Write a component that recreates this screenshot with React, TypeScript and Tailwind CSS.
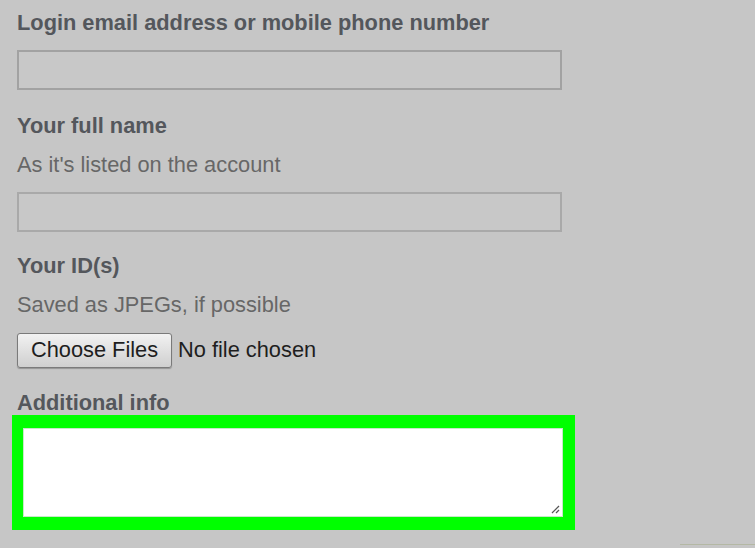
import React from "react";

export default function App() {
  const font = { fontFamily: '"Liberation Sans", Arial, Helvetica, sans-serif' };
  return (
    <div className="w-[755px] h-[548px] bg-[#c6c6c6] overflow-hidden relative" style={font}>
      <div className="flex flex-col pl-[17px] pt-[11px]">
        <div className="h-[24px] leading-[24px] text-[21.8px] font-bold text-[#54575c]">
          Login email address or mobile phone number
        </div>
        <div className="mt-[15px] w-[545px] h-[40px] border-2 border-[#a2a2a2] bg-[#c8c8c8]" />
        <div className="mt-[24px] h-[24px] leading-[24px] text-[21.8px] font-bold text-[#54575c]">
          Your full name
        </div>
        <div className="mt-[15px] h-[24px] leading-[24px] text-[21.8px] text-[#676767]">
          As it's listed on the account
        </div>
        <div className="mt-[15px] w-[545px] h-[40px] border-2 border-[#a9a9a9] bg-[#c8c8c8]" />
        <div className="mt-[22px] h-[24px] leading-[24px] text-[21.8px] font-bold text-[#54575c]">
          Your ID(s)
        </div>
        <div className="mt-[15px] h-[24px] leading-[24px] text-[21.8px] text-[#676767]">
          Saved as JPEGs, if possible
        </div>
        <div className="mt-[16px] flex items-center">
          <div className="w-[155px] h-[35px] flex items-center justify-center rounded-[3px] border border-[#7a7a7a] bg-gradient-to-b from-[#f2f2f2] to-[#cfcfcf] text-[21.8px] text-[#1e1e1e] shadow-[0_1px_1px_rgba(0,0,0,0.25)]">
            Choose Files
          </div>
          <div className="ml-[6px] text-[21.8px] text-[#1e1e1e]">No file chosen</div>
        </div>
        <div className="mt-[23px] h-[24px] leading-[24px] text-[21.8px] font-bold text-[#54575c]">
          Additional info
        </div>
        <div className="-ml-[5px] w-[563px] h-[115px] bg-[#00ff00] pt-[13px] pb-[13px] pl-[11px] pr-[12px]">
          <div className="relative w-full h-full bg-white border border-[#c8e8c8]">
            <svg className="absolute right-[2px] bottom-[2px]" width="10" height="10" viewBox="0 0 10 10">
              <line x1="9" y1="2" x2="2" y2="9" stroke="#555" strokeWidth="1.2" />
              <line x1="9" y1="6" x2="6" y2="9" stroke="#555" strokeWidth="1.2" />
            </svg>
          </div>
        </div>
      </div>
      <div className="absolute left-[680px] bottom-[3px] w-[75px] h-[1px] bg-[#b4b8a4]" />
    </div>
  );
}
